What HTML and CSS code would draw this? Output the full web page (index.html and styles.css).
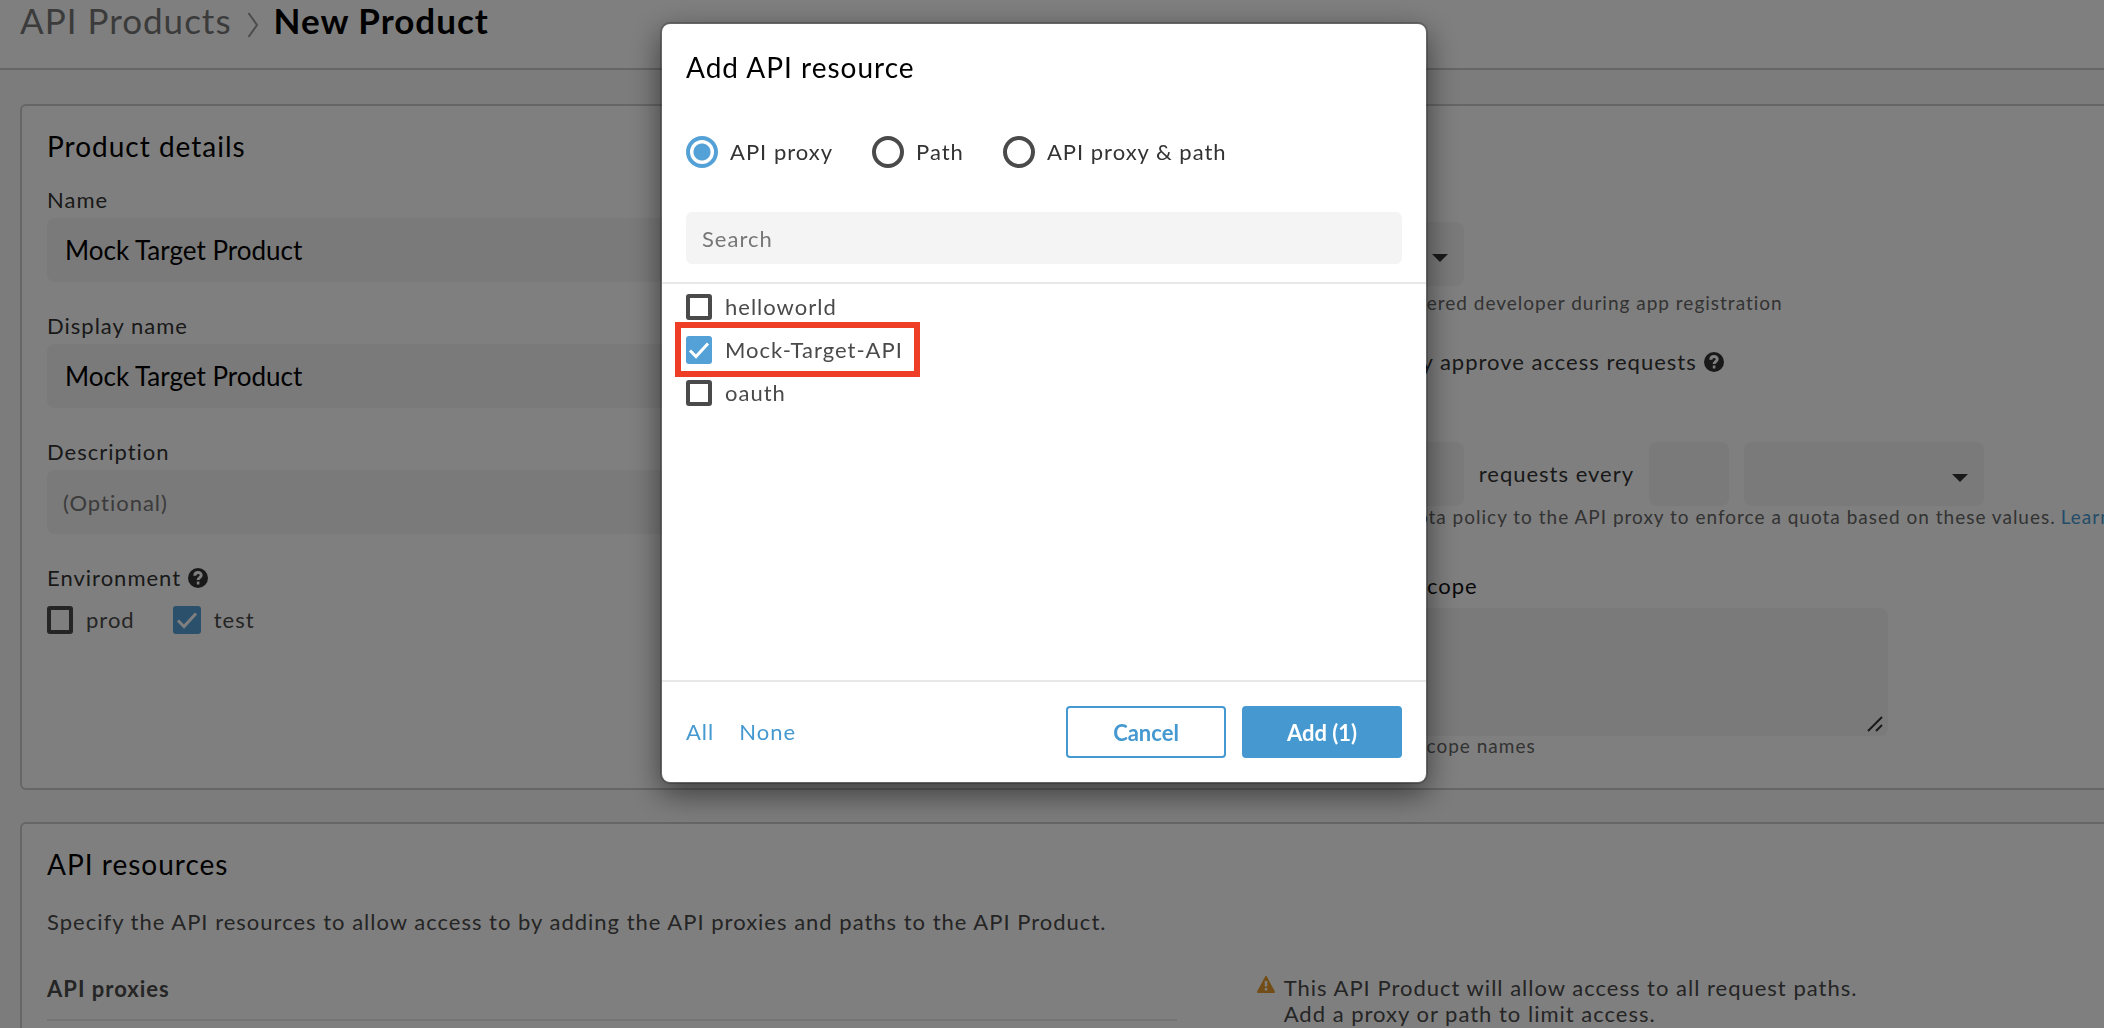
FILE: index.html
```html
<!DOCTYPE html>
<html lang="en">
<head>
  <meta charset="utf-8">
  <title>New Product</title>
  <link rel="stylesheet" href="styles.css">
</head>
<body>
  <header class="page-header">
    <a class="crumb" href="#">API Products</a>
    <svg class="crumb-arrow" viewBox="0 0 12 26" aria-hidden="true"><path d="M1.500 1L10 13L1.500 25"/></svg>
    <h1 class="page-title">New Product</h1>
  </header>

  <main class="page">
    <section class="card">
      <h2 class="card-title">Product details</h2>
      <div class="columns">
        <div class="fields">
          <div class="field">
            <label for="name">Name</label>
            <input class="text-input" id="name" type="text" value="Mock Target Product">
          </div>
          <div class="field">
            <label for="display">Display name</label>
            <input class="text-input" id="display" type="text" value="Mock Target Product">
          </div>
          <div class="field">
            <label for="description">Description</label>
            <input class="text-input text-input-optional" id="description" type="text" placeholder="(Optional)">
          </div>
          <div class="environment">
            <div class="help-label">Environment
              <svg class="help" viewBox="0 0 20 20" aria-hidden="true"><circle cx="10" cy="10" r="10"/><path d="M6.800 7.800C6.800 3.300 13.200 3.600 13.200 7.300C13.200 9.700 10.100 9.500 10.100 12"/><path d="M8.800 15h2.600"/></svg>
            </div>
            <div class="env-options">
              <label class="choice"><input class="check check-large" type="checkbox">prod</label>
              <label class="choice"><input class="check check-large" type="checkbox" checked>test</label>
            </div>
          </div>
        </div>

        <div class="settings">
          <label for="access">Access</label>
          <div class="select-box select-access">
            <select class="select" id="access"><option></option></select>
            <svg class="caret" viewBox="0 0 16 8" aria-hidden="true"><path d="M0 0H16L8 8Z"/></svg>
          </div>
          <p class="hint hint-access">Available to any registered developer during app registration</p>
          <div class="help-label approve">Manually approve access requests
            <svg class="help" viewBox="0 0 20 20" aria-hidden="true"><circle cx="10" cy="10" r="10"/><path d="M6.800 7.800C6.800 3.300 13.200 3.600 13.200 7.300C13.200 9.700 10.100 9.500 10.100 12"/><path d="M8.800 15h2.600"/></svg>
          </div>
          <label class="quota-label" for="quota">Quota</label>
          <div class="quota-row">
            <input class="text-input quota-count" id="quota" type="text">
            <label for="interval">requests every</label>
            <input class="text-input quota-interval" id="interval" type="text">
            <div class="select-box select-unit">
              <select class="select" aria-label="Interval unit"><option></option></select>
              <svg class="caret" viewBox="0 0 16 8" aria-hidden="true"><path d="M0 0H16L8 8Z"/></svg>
            </div>
          </div>
          <p class="hint hint-quota"><span class="hint-quota-text">Add a quota policy to the API proxy to enforce a quota based on these values.</span><a href="#">Learn more</a></p>
          <label class="scope-label" for="scope">Allowed OAuth scope</label>
          <div class="scope-box">
            <textarea class="scope" id="scope"></textarea>
            <svg class="grip" viewBox="0 0 16 16" aria-hidden="true"><path d="M1 15L15 1M9 15L15 9"/></svg>
          </div>
          <p class="hint hint-scope">Comma-separated scope names</p>
        </div>
      </div>
    </section>

    <section class="card">
      <h2 class="card-title">API resources</h2>
      <p class="intro">Specify the API resources to allow access to by adding the API proxies and paths to the API Product.</p>
      <div class="columns">
        <h3 class="list-title">API proxies</h3>
        <div class="warning">
          <svg class="warning-icon" viewBox="0 0 18 17" aria-hidden="true"><path d="M9 1L17 16H1Z" fill="#e79b2e" stroke="#e79b2e" stroke-width="2" stroke-linejoin="round"/><path d="M9 5V10.500M9 12V14.500" stroke="#fff" stroke-width="2.500"/></svg>
          <p>This API Product will allow access to all request paths.<br>Add a proxy or path to limit access.</p>
        </div>
      </div>
    </section>
  </main>

  <div class="backdrop">
    <div class="dialog" role="dialog" aria-modal="true" aria-labelledby="dialog-title">
      <div class="dialog-head">
        <h2 class="dialog-title" id="dialog-title">Add API resource</h2>
        <div class="kinds">
          <label class="kind"><input class="radio" type="radio" name="kind" checked>API proxy</label>
          <label class="kind"><input class="radio" type="radio" name="kind">Path</label>
          <label class="kind"><input class="radio" type="radio" name="kind">API proxy &amp; path</label>
        </div>
        <input class="search" type="text" placeholder="Search" aria-label="Search">
      </div>
      <div class="proxies">
        <label class="choice"><input class="check" type="checkbox">helloworld</label>
        <label class="choice choice-marked"><input class="check" type="checkbox" checked>Mock-Target-API</label>
        <label class="choice"><input class="check" type="checkbox">oauth</label>
      </div>
      <div class="dialog-foot">
        <a href="#">All</a>
        <a href="#">None</a>
        <div class="dialog-actions">
          <button class="button button-cancel" type="button">Cancel</button>
          <button class="button button-add" type="button">Add (1)</button>
        </div>
      </div>
    </div>
  </div>
</body>
</html>
```
FILE: styles.css
```css
* {
  box-sizing: border-box;
}

body {
  margin: 0;
  overflow: hidden;
  background: #f8f8f8;
  color: #4a4a4a;
  font-family: Lato, "Liberation Sans", sans-serif;
  font-size: 22px;
  line-height: 28px;
  letter-spacing: 1px;
}

h1,
h2,
h3,
p {
  margin: 0;
  font-weight: 400;
}

a {
  color: #4599d0;
  text-decoration: none;
}

input,
select,
textarea,
button {
  margin: 0;
  border: 0;
  font-family: inherit;
}

/* Header */
.page-header {
  display: flex;
  gap: 15px;
  padding: 0 20px 28px;
  border-bottom: 2px solid #ccc;
  background: #fff;
  font-size: 35px;
  line-height: 40px;
}

.crumb {
  color: #777;
}

.crumb-arrow {
  width: 12px;
  height: 26px;
  margin-top: 12px;
  fill: none;
  stroke: #999;
  stroke-width: 2;
}

.page-title {
  font-size: 35px;
  font-weight: 700;
  color: #000;
}

/* Cards */
.page {
  display: flex;
  flex-direction: column;
  gap: 32px;
  padding: 34px 0 0 20px;
}

.card {
  padding: 23px 0 32px 25px;
  border: 2px solid #ccc;
  border-right: 0;
  border-radius: 6px 0 0 6px;
  background: #fff;
}

.card-title {
  font-size: 28px;
  line-height: 34px;
  color: #000;
}

.columns {
  display: grid;
  grid-template-columns: 4fr 3fr;
  gap: 80px;
}

.card-title + .columns {
  margin-top: 23px;
}

.fields,
.settings {
  display: flex;
  flex-direction: column;
  min-width: 0;
  color: #333;
}

.fields {
  gap: 30px;
}

.field {
  display: flex;
  flex-direction: column;
  gap: 4px;
}

.text-input {
  height: 64px;
  padding: 0 18px;
  border-radius: 8px;
  background: #f4f4f4;
  color: #000;
  font-size: 26px;
}

.text-input-optional {
  padding: 0 16px;
  font-size: 22px;
  letter-spacing: 1px;
}

.text-input::placeholder,
.search::placeholder {
  color: #777;
}

.help-label {
  display: flex;
  align-items: center;
  gap: 7px;
}

.help {
  width: 20px;
  height: 20px;
  fill: #333;
}

.help path {
  fill: none;
  stroke: #fff;
  stroke-width: 3;
}

.env-options {
  display: flex;
  gap: 38px;
  margin-top: 14px;
}

.choice {
  display: flex;
  align-items: center;
  gap: 13px;
  color: #4a4a4a;
}

.check {
  appearance: none;
  width: 26px;
  height: 26px;
  border: 4px solid #4a4a4a;
  border-radius: 3px;
}

.check-large {
  height: 28px;
}

.check:checked {
  height: 28px;
  border: 0;
  background: #54a1d8 url("data:image/svg+xml,%3Csvg xmlns='http://www.w3.org/2000/svg' viewBox='0 0 26 28'%3E%3Cpath d='M4 14.500L10 20.500L22 7.500' fill='none' stroke='%23fff' stroke-width='3'/%3E%3C/svg%3E") center no-repeat;
}

.check-large:checked {
  width: 28px;
}

/* Access, quota and scope */
.select-box {
  position: relative;
  height: 64px;
}

.select {
  appearance: none;
  width: 100%;
  height: 100%;
  border-radius: 8px;
  background: #f4f4f4;
}

.caret {
  position: absolute;
  top: 32px;
  right: 16px;
  width: 16px;
  height: 8px;
  fill: #333;
}

.select-access {
  width: 207px;
  margin-top: 8px;
}

.hint {
  display: flex;
  font-size: 19px;
  line-height: 22px;
  white-space: nowrap;
  color: #666;
}

.hint-access {
  justify-content: flex-end;
  width: 526px;
  margin-top: 6px;
}

.approve {
  justify-content: flex-end;
  width: 467px;
  margin-top: 34px;
}

.quota-label {
  margin-top: 32px;
}

.quota-row {
  display: flex;
  align-items: center;
  gap: 15px;
  margin-top: 6px;
}

.quota-count {
  width: 207px;
}

.quota-interval {
  width: 80px;
}

.select-unit {
  width: 240px;
}

.hint-quota {
  gap: 5px;
}

.hint-quota-text {
  flex: none;
  width: 799px;
  text-align: right;
}

.scope-label {
  display: flex;
  justify-content: flex-end;
  width: 221px;
  margin-top: 44px;
  white-space: nowrap;
  color: #111;
}

.scope-box {
  position: relative;
  width: 631px;
  height: 128px;
  margin-top: 8px;
}

.scope {
  display: block;
  width: 100%;
  height: 100%;
  border-radius: 8px;
  background: #f4f4f4;
  resize: none;
}

.grip {
  position: absolute;
  right: 5px;
  bottom: 4px;
  width: 16px;
  height: 16px;
  fill: none;
  stroke: #333;
  stroke-width: 2;
}

.hint-scope {
  justify-content: flex-end;
  width: 279px;
  line-height: 20px;
}

/* API resources */
.intro {
  margin: 27px 0 39px;
}

.list-title {
  align-self: start;
  padding-bottom: 16px;
  border-bottom: 2px solid #e8e8e8;
  font-size: 22px;
  font-weight: 700;
}

.warning {
  display: flex;
  gap: 9px;
  line-height: 26px;
}

.warning-icon {
  width: 18px;
  height: 17px;
  margin-top: 1px;
}

/* Dialog */
.backdrop {
  position: fixed;
  inset: 0;
  padding: 22px 16px 0 0;
  background: rgba(0, 0, 0, 0.5);
}

.dialog {
  width: 768px;
  margin: 0 auto;
  border: 2px solid rgba(0, 0, 0, 0.2);
  border-radius: 10px;
  background: #fff;
  background-clip: padding-box;
  box-shadow: 0 10px 30px rgba(0, 0, 0, 0.5);
}

.dialog-head {
  display: flex;
  flex-direction: column;
  padding: 26px 24px 18px;
}

.dialog-title {
  font-size: 28px;
  line-height: 34px;
  color: #000;
}

.kinds {
  display: flex;
  gap: 39px;
  margin: 52px 0 44px;
  color: #333;
}

.kind {
  display: flex;
  align-items: center;
  gap: 12px;
}

.radio {
  appearance: none;
  width: 32px;
  height: 32px;
  border: 4px solid #4a4a4a;
  border-radius: 50%;
}

.radio:checked {
  border-color: #54a1d8;
  background: radial-gradient(circle, #54a1d8 8px, #fff 9px);
}

.search {
  height: 52px;
  padding: 0 16px;
  border-radius: 6px;
  background: #f4f4f4;
  font-size: 22px;
  letter-spacing: 1px;
}

.proxies {
  display: flex;
  flex-direction: column;
  gap: 15px;
  min-height: 400px;
  padding: 9px 24px;
  border-top: 2px solid #e8e8e8;
  border-bottom: 2px solid #e8e8e8;
}

.choice-marked {
  position: relative;
  align-self: flex-start;
}

.choice-marked::after {
  content: "";
  position: absolute;
  inset: -14px -17px -13px -11px;
  border: 6px solid #ee3f26;
}

.dialog-foot {
  display: flex;
  align-items: center;
  gap: 25px;
  padding: 24px;
}

.dialog-actions {
  display: flex;
  gap: 16px;
  margin-left: auto;
}

.button {
  width: 160px;
  height: 52px;
  border: 2px solid #4599d0;
  border-radius: 4px;
  font-size: 22px;
  font-weight: 700;
}

.button-cancel {
  background: #fff;
  color: #4599d0;
}

.button-add {
  background: #4599d0;
  color: #fff;
}
```
